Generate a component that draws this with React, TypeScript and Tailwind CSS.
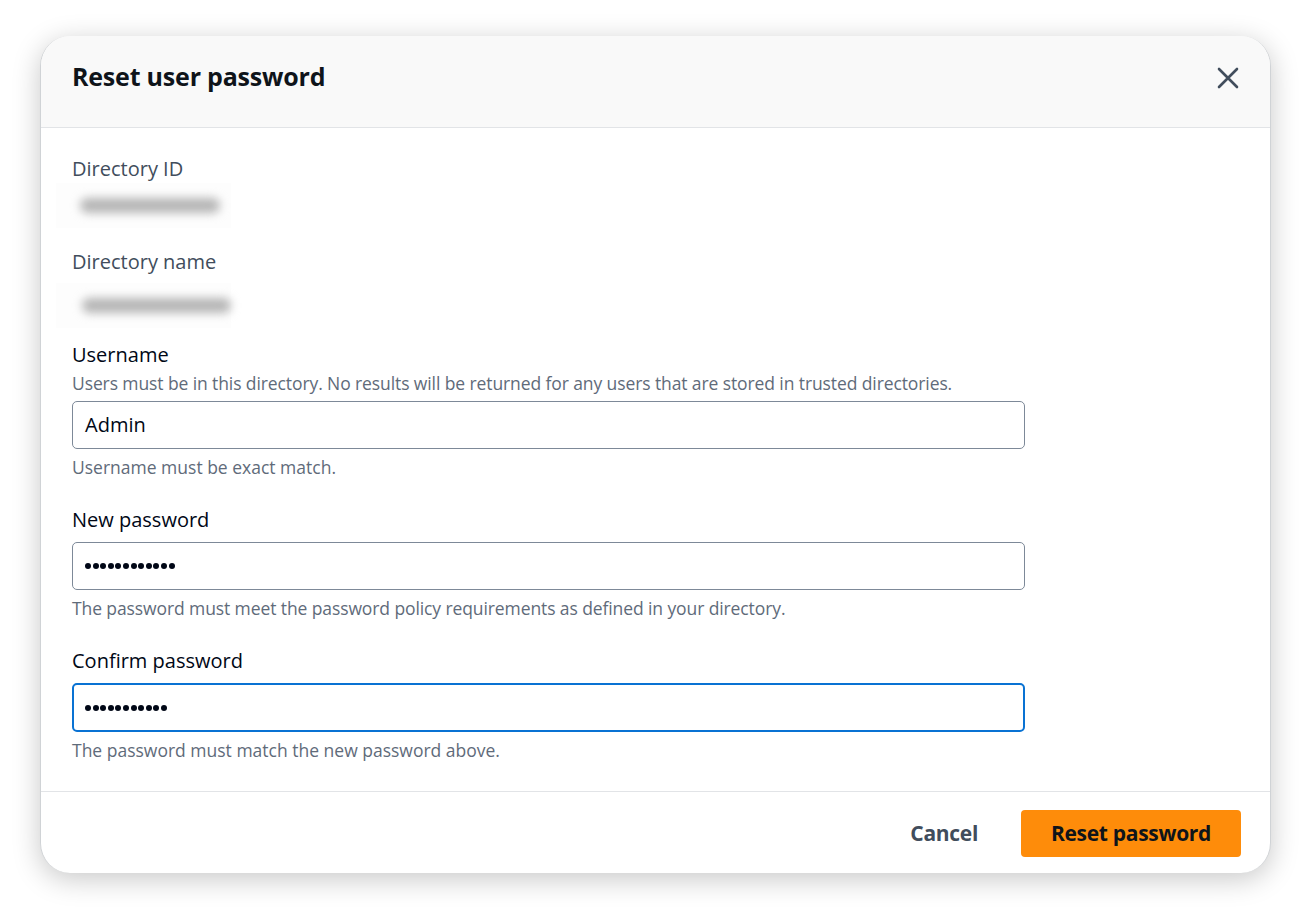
import React from "react";

const font = { fontFamily: '"Open Sans", "Noto Sans", Arial, sans-serif' };

function Blur({ w, ml }: { w: number; ml: number }) {
  return (
    <div className="h-[45px] flex items-center -ml-[16px] w-[175px] bg-[#fdfdfd]">
      <div
        className="h-[15px] rounded-full bg-[#b5b5b5] blur-[5px]"
        style={{ width: w, marginLeft: ml }}
      />
    </div>
  );
}

function Dots({ n }: { n: number }) {
  return (
    <div className="flex items-center gap-[1.6px]">
      {Array.from({ length: n }).map((_, i) => (
        <span key={i} className="block w-[6px] h-[6px] rounded-full bg-[#000716]" />
      ))}
    </div>
  );
}

export default function App() {
  return (
    <div className="w-[1310px] h-[910px] bg-white pt-[36px] pl-[40px]" style={font}>
      <div className="w-[1231px] h-[837px] rounded-[30px] bg-white overflow-hidden flex flex-col border-x border-[#d0d3d6] shadow-[0_6px_28px_rgba(0,0,0,0.22)]">
        {/* header */}
        <div className="h-[92px] shrink-0 bg-[#f9f9f9] border-b border-[#e2e4e7] flex items-center justify-between pl-[31px] pr-[30px]">
          <h1 className="text-[25px] font-bold text-[#0f141a] tracking-[-0.2px] leading-none -mt-[10px]">
            Reset user password
          </h1>
          <svg width="22" height="22" viewBox="0 0 22 22" className="mr-[1px] -mt-[8px]">
            <path d="M2 2 L20 20 M20 2 L2 20" stroke="#414d5c" strokeWidth="2.6" strokeLinecap="round" />
          </svg>
        </div>
        {/* body */}
        <div className="flex-1 pl-[31px] pt-[29px] text-[#000716]">
          <div className="text-[20px] leading-[24px] text-[#414d5c]">Directory ID</div>
          <div className="mt-[2px]"><Blur w={140} ml={24} /></div>
          <div className="mt-[22px] text-[20px] leading-[24px] text-[#414d5c]">Directory name</div>
          <div className="mt-[9px]"><Blur w={150} ml={26} /></div>
          <div className="mt-[15px] text-[20px] leading-[24px] text-[#000716]">Username</div>
          <div className="mt-[5px] text-[17.5px] leading-[22px] text-[#5f6b7a] tracking-[-0.1px]">
            Users must be in this directory. No results will be returned for any users that are stored in trusted directories.
          </div>
          <div className="mt-[7px] w-[953px] h-[48px] rounded-[5px] border border-[#7d8998] flex items-center pl-[12px] text-[20px] text-[#000716]">
            Admin
          </div>
          <div className="mt-[7px] text-[17.5px] leading-[22px] text-[#5f6b7a]">Username must be exact match.</div>
          <div className="mt-[30px] text-[20px] leading-[24px]">New password</div>
          <div className="mt-[10px] w-[953px] h-[48px] rounded-[5px] border border-[#7d8998] flex items-center pl-[12px]">
            <Dots n={12} />
          </div>
          <div className="mt-[7px] text-[17.5px] leading-[22px] text-[#5f6b7a] tracking-[-0.1px]">
            The password must meet the password policy requirements as defined in your directory.
          </div>
          <div className="mt-[30px] text-[20px] leading-[24px]">Confirm password</div>
          <div className="mt-[10px] w-[953px] h-[49px] rounded-[5px] border-2 border-[#0972d3] flex items-center pl-[11px]">
            <Dots n={11} />
          </div>
          <div className="mt-[7px] text-[17.5px] leading-[22px] text-[#5f6b7a]">
            The password must match the new password above.
          </div>
        </div>
        {/* footer */}
        <div className="h-[82px] shrink-0 border-t border-[#e2e4e7] flex items-center justify-end pr-[29px] pt-[2px]">
          <button className="text-[21px] font-bold text-[#414d5c] mr-[43px] tracking-[-0.3px]">Cancel</button>
          <button className="w-[220px] h-[47px] rounded-[4px] bg-[#fe8c0a] text-[21px] font-bold text-[#0f141a] tracking-[-0.3px]">
            Reset password
          </button>
        </div>
      </div>
    </div>
  );
}
